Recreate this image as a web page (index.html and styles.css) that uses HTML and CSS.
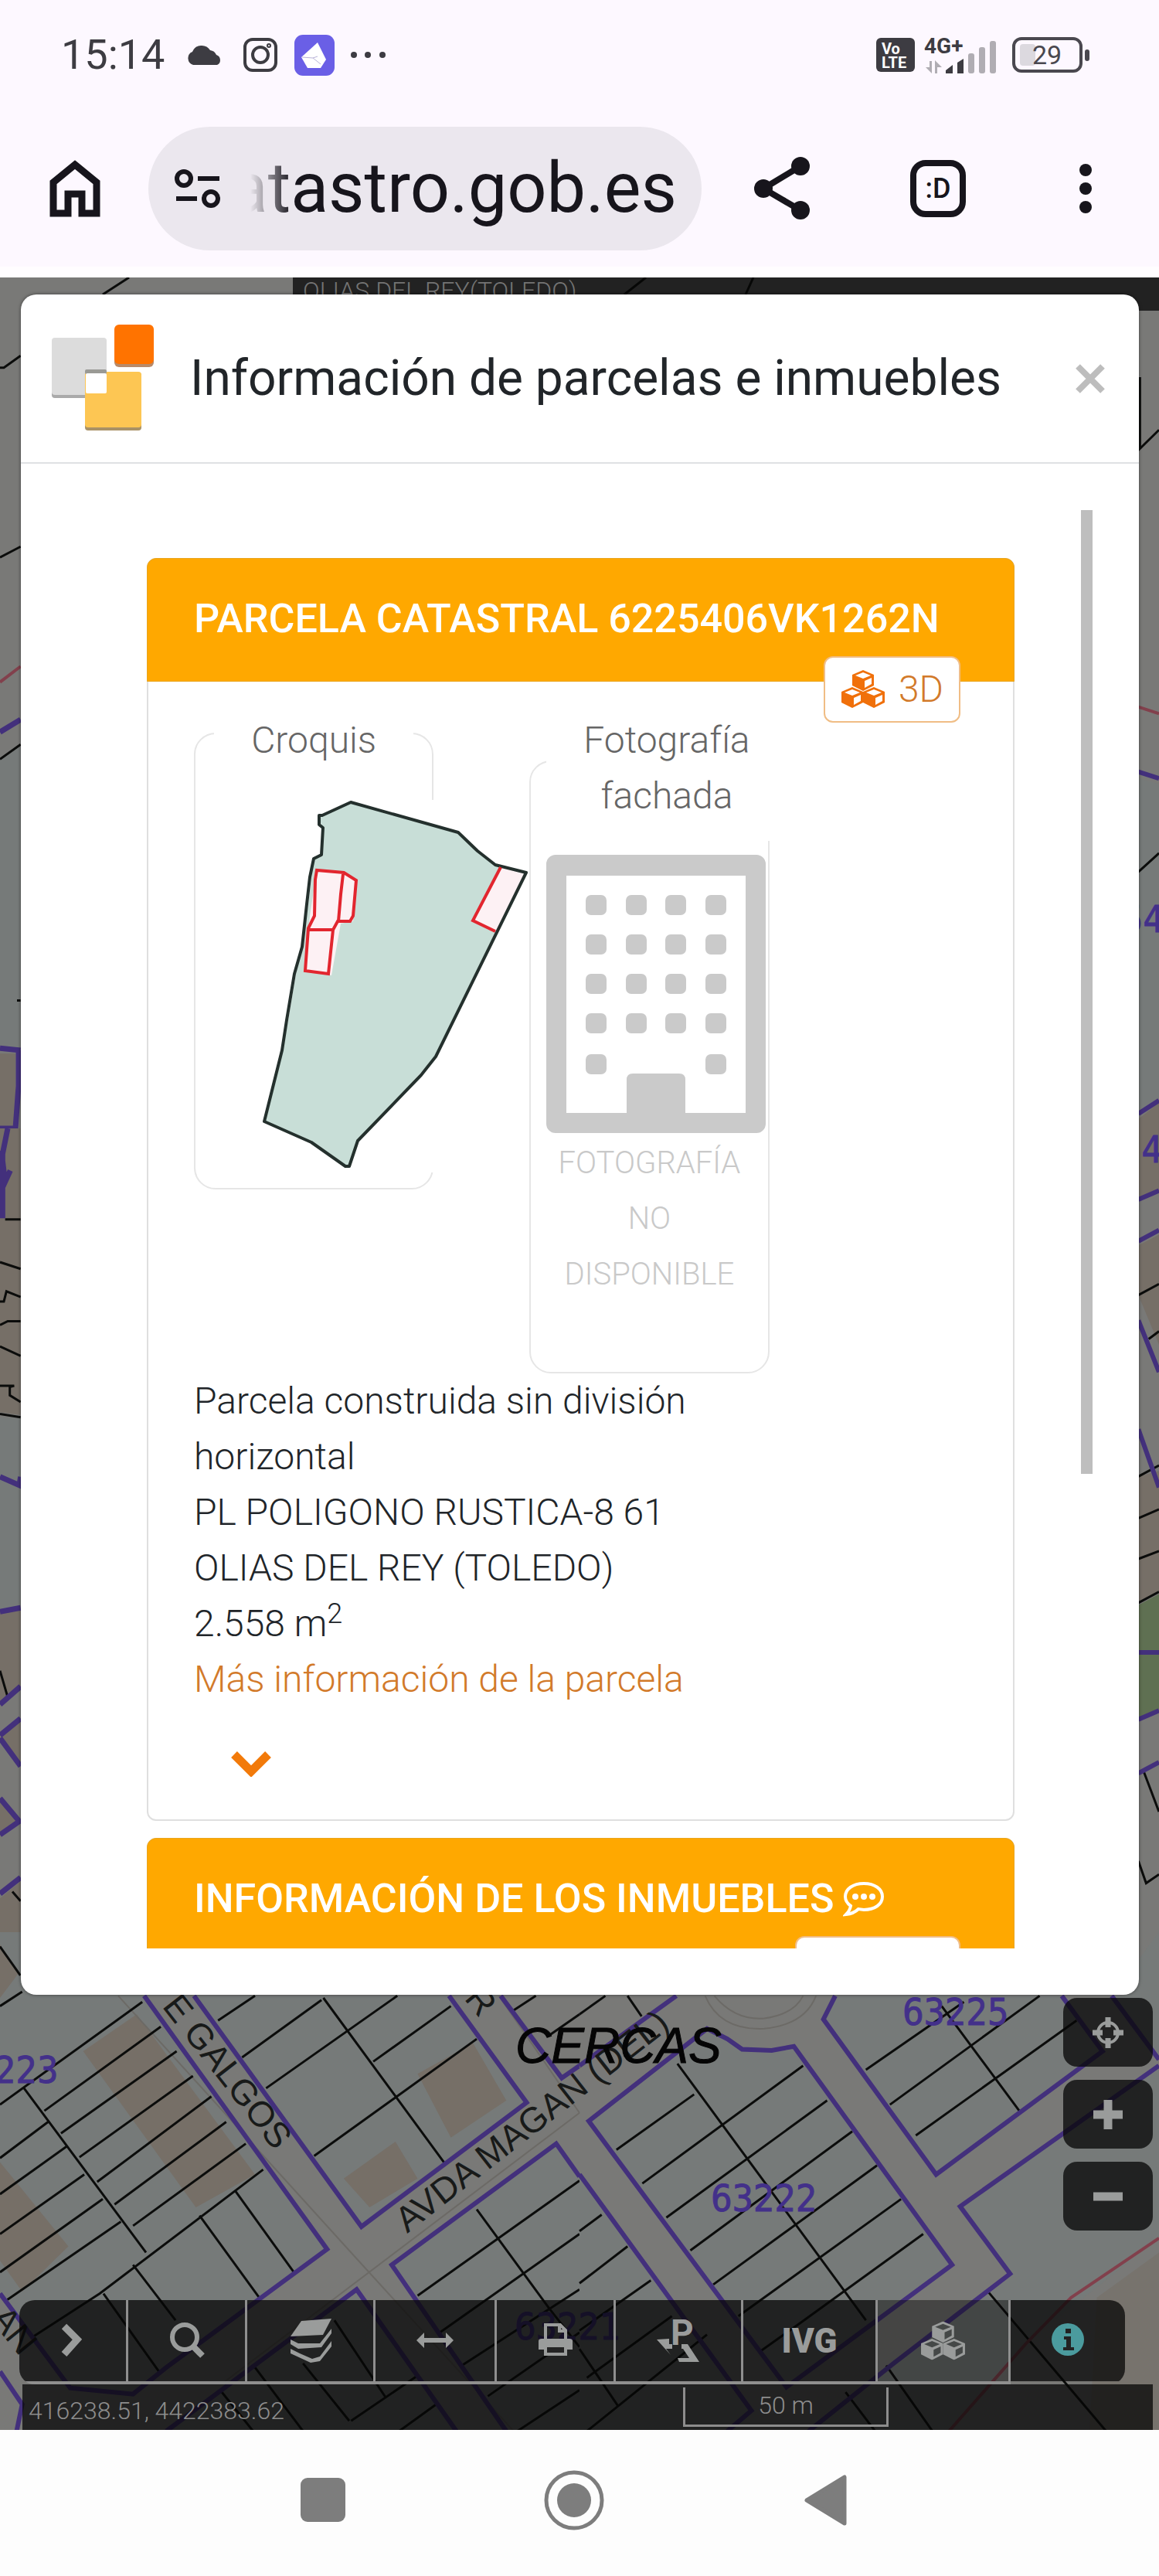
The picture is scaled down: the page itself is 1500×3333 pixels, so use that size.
FILE: index.html
```html
<!DOCTYPE html>
<html lang="es">
<head>
  <meta charset="UTF-8" />
  <meta name="viewport" content="width=device-width, initial-scale=1" />
  <title>Información de parcelas e inmuebles</title>
  <link rel="stylesheet" href="styles.css">
</head>
<body>
  <!-- Shared shapes -->
  <svg class="defs" aria-hidden="true">
    <symbol id="cube" viewBox="0 0 30 27">
      <path class="cube-side" d="M15 0 29 6V20L15 27 1 20V6Z"/>
      <path class="cube-face" d="M15 3 25 7 15 11 5 7ZM17 14 26 10V18L17 23Z"/>
    </symbol>
    <symbol id="cubes" viewBox="0 0 59 50">
      <use href="#cube" x="14" y="0" width="30" height="27"/>
      <use href="#cube" x="0" y="22" width="30" height="27"/>
      <use href="#cube" x="28" y="22" width="30" height="27"/>
    </symbol>
  </svg>

  <div class="status-bar">
    <span class="clock">15:14</span>
    <svg class="cloud" viewBox="0 0 48 26"><path d="M9 26a9 9 0 0 1-1-17A13 13 0 0 1 31 7a10 10 0 0 1 8 6 7 7 0 0 1 1 13Z" fill="#3d3c42"/></svg>
    <svg class="camera" viewBox="0 0 44 44" fill="none" stroke="#3d3c42" stroke-width="4"><rect x="2" y="2" width="40" height="40" rx="10"/><circle cx="22" cy="22" r="10"/><circle cx="33" cy="10" r="1"/></svg>
    <svg class="gem" viewBox="0 0 52 53"><rect width="52" height="53" rx="11" fill="#6a5fe6"/><path d="M30 10 9 29 17 43H34L41 32Z" fill="#fff"/><path d="M10 29 24 30 30 28M24 30 34 38" fill="none" stroke="#b9b4d8" stroke-width="1"/></svg>
    <svg class="more" viewBox="0 0 48 10"><g fill="#3d3c42"><circle cx="5" cy="5" r="4"/><circle cx="23" cy="5" r="4"/><circle cx="42" cy="5" r="4"/></g></svg>
    <span class="spacer"></span>
    <svg class="volte" viewBox="0 0 50 44"><rect width="50" height="44" rx="6" fill="#3d3c42"/><text x="7" y="21">Vo</text><text x="7" y="39">LTE</text></svg>
    <svg class="signal" viewBox="0 0 96 48">
      <text x="0" y="22">4G+</text>
      <g fill="#b0adb3"><path d="M7 32H10V48L2 40H7ZM14 48V31L23 40H17V48Z"/><rect x="57" y="22" width="8" height="26" rx="3"/><rect x="71" y="14" width="8" height="34" rx="3"/><rect x="85" y="6" width="8" height="42" rx="3"/></g>
      <path d="M28 48V44L37 37V48ZM43 48V34L51 29V48Z" fill="#3d3c42"/>
    </svg>
    <svg class="battery" viewBox="0 0 102 46"><rect x="2" y="2" width="87" height="42" rx="10" fill="none" stroke="#4a484f" stroke-width="4"/><rect x="10" y="9" width="20" height="28" rx="4" fill="#dcd9df"/><rect x="94" y="16" width="6" height="15" rx="3" fill="#4a484f"/><text x="26" y="35">29</text></svg>
  </div>

  <header class="browser-bar">
    <button aria-label="Inicio"><svg class="home" viewBox="0 0 66 74"><path d="M33 6 61 29V69H42V44H24V69H5V29Z" fill="none" stroke="#17151c" stroke-width="9"/></svg></button>
    <div class="address">
      <svg class="tune" viewBox="0 0 60 50" fill="none" stroke="#17151c" stroke-width="6"><circle cx="12" cy="12" r="9"/><path d="M30 12H58M2 38H29"/><circle cx="47" cy="38" r="9"/></svg>
      <span class="url">atastro.gob.es</span>
    </div>
    <button aria-label="Compartir"><svg class="share" viewBox="0 0 72 82" fill="#17151c"><path d="M60 12 12 41 60 69" fill="none" stroke="#17151c" stroke-width="8"/><circle cx="60" cy="12" r="12"/><circle cx="12" cy="41" r="12"/><circle cx="60" cy="69" r="12"/></svg></button>
    <button class="tabs">:D</button>
    <button aria-label="Menú"><svg class="kebab" viewBox="0 0 16 66" fill="#17151c"><circle cx="8" cy="9" r="8"/><circle cx="8" cy="33" r="8"/><circle cx="8" cy="57" r="8"/></svg></button>
  </header>

  <main class="map">
    <svg class="map-drawing" viewBox="0 359 1500 2785" preserveAspectRatio="xMidYMax slice" aria-hidden="true">
      <rect y="359" width="1500" height="2785" fill="#797977"/>

      <!-- West edge -->
      <g transform="translate(0 360) scale(.3333 .7015)">
        <path class="block" d="M0 885 80 860V1420L0 1415Z"/>
        <path class="building" d="M0 1430 60 1430V1568H0Z"/>
        <path class="plot" d="M0 165H15L80 143M0 515 80 495M0 887 80 860M66 1332H80"/>
        <path class="limit" d="M0 745 80 716"/>
        <path class="edge thick" d="M0 837 80 814M0 1420 80 1424M72 1424V1490L60 1568 0 1568"/>
      </g>
      <g transform="translate(0 1460) scale(.3333 .7271)">
        <path class="block" d="M0 515H80V850L0 858Z"/>
        <path class="building" d="M0 0H80V510L0 505ZM0 860 80 855V1000L0 1020ZM0 1085 80 1130V1050ZM0 1370 80 1340V1530H0ZM0 1195 75 1233 0 1255Z"/>
        <path class="plot" d="M20 162H80M0 238 80 250M0 308H15L25 290 80 300M0 350 30 343H80M0 388 80 405M0 458H55L38 460V475L80 487M0 508 80 514M0 965 30 1012M48 1358 80 1375M0 1457 80 1510M0 1556 90 1530"/>
        <path class="edge thick" d="M30 0 8 50 20 95 40 75M10 40V160M0 620 75 635 80 620M0 860 80 853M0 1025 80 993M0 1080 80 1050M0 1085 80 1135M0 1192 75 1233 0 1257M0 1362 80 1333"/>
      </g>

      <!-- East edge -->
      <g transform="translate(1440 360) scale(.3333 1.4223)">
        <path class="block" d="M100 455 180 460V745L100 760Z"/>
        <path class="building" d="M100 765 180 750V830L100 840ZM100 880 180 870V970L100 925ZM100 1090 180 1085V1195L100 1205Z"/>
        <path d="M100 1207 180 1197V1302L100 1310Z" fill="#5f7052"/>
        <path class="plot" d="M106 90V155L180 138M100 540 180 523M100 925 180 915M140 965 180 958M100 1090 180 1080M100 1128 180 1120M100 1165 180 1158M100 1205 180 1195M120 1358 180 1395M100 1440 130 1460 180 1452"/>
        <path class="limit" d="M100 390 180 396"/>
        <path class="edge" d="M100 449 180 455M100 760 180 748M100 838 180 830M100 876 180 866M100 948 180 995M100 1047 180 1100M100 1250H180M100 1311 180 1303M100 1360 180 1350"/>
      </g>
      <text class="ref" x="1452" y="1206">54</text>
      <text class="ref" x="1450" y="1504">24</text>

      <!-- South side, west half -->
      <g transform="translate(0 2500) scale(.4783 .5313)">
        <path class="block" d="M0 0H390V155L885 772 450 1060 360 1125 190 1110 0 880ZM525 155 978 717 1425 415 1215 155ZM1060 810 1505 515 1568 595V1215H1370ZM965 870 450 1215H1235Z"/>
        <path class="building" d="M225 290 370 200 690 590 530 670ZM0 560 185 765 60 875 0 800ZM1130 345 1280 270 1370 410 1220 500ZM930 600 1070 510 1130 600 1000 670ZM0 30 50 100 0 160Z"/>
        <path class="lane" d="M320 155 960 790 1390 1215M600 1100 1568 440M1350 155 1568 440"/>
        <path class="plot" d="M0 35 55 105M0 180 60 145M65 380 395 780M280 880 430 1070M360 810 475 945M385 170 0 420M435 230 120 435M130 462 0 550M478 290 165 490M183 520 0 638M522 350 215 548M228 590 0 735M572 400 263 608M327 705 20 895M278 650 0 828M612 462 310 663M665 515 360 715M712 578 270 880 90 985M540 690 700 888M635 628 795 828"/>
        <path class="plot" d="M690 155 590 215M870 165 655 305M1075 155 720 380M875 160 1205 565M1220 180 1010 315M1290 260 850 545M1450 155 1390 190M1568 200 1480 255"/>
        <path class="plot" d="M1290 675 1485 915 1568 1010M1568 605 1130 885M1568 735 1190 975M1568 870 1250 1055M1568 975 1320 1130M1568 1115 1400 1215M690 1060 820 1215M820 1050 945 1190M905 945 1045 1135M1130 1080 950 1190M1180 1150 1080 1215M600 1120 685 1215"/>
        <path class="edge" d="M390 155 885 772 450 1060 360 1125 190 1110 0 880M525 155 978 717 1425 415 1215 155M1355 155 1520 355 1568 325M1568 595 1505 515 1060 810 1370 1215M450 1215 965 870 1235 1215M0 1070 60 1150 45 1215"/>
      </g>

      <!-- South side, east half -->
      <g transform="translate(750 2500) scale(.4783 .5313)">
        <path class="block" d="M25 460 345 235 400 260 440 285 520 288 580 278 1008 810 560 1108ZM692 155 660 212 965 590 1415 290 1305 155ZM1568 0V310L1440 155ZM1568 325 1030 668 1165 832 620 1215H1000L1210 1000 1568 745ZM0 590 465 1165 430 1215H0Z"/>
        <path class="lane" d="M340 155Q380 240 500 235 610 225 640 155M365 155Q420 215 500 210 580 200 605 155M0 330 250 160"/>
        <path class="building" d="M1568 780 1400 890 1380 1215H1568Z" opacity=".6"/>
        <path class="plot" d="M0 200 70 155M130 155 168 205M265 320 775 945M310 395 100 530M605 325 170 612M670 410 235 695M738 485 300 775M805 568 362 858M870 650 430 935M930 735 600 950 490 1020"/>
        <path class="plot" d="M980 180 1190 435M1040 170 775 335M1245 155 840 420M1345 215 910 495M1105 875 1425 1215M830 1055 955 1215M720 1120 800 1215M60 688 0 728M130 765 0 855M193 848 0 970M250 935 20 1085M345 980 20 1215M0 1015 105 1155"/>
        <path class="edge" d="M0 325 262 155M0 590 465 1165 400 1215M25 460 345 235 400 260 440 285 520 288 580 278 1008 810 560 1108ZM692 155 660 212 965 590 1415 290 1305 155M1440 155 1568 310M1568 325 1030 668 1165 832 850 1050 620 1215"/>
        <path class="limit" d="M1568 745 1330 890 1210 1000 1000 1215"/>
      </g>

      <path class="plot" d="M167 359 133 381M836 359 808 381M975 359 965 381"/>
      <text class="ref" x="-7" y="2695">223</text>
      <text class="ref" x="920" y="2861">63222</text>
      <text class="ref" x="1168" y="2620">63225</text>
      <text class="ref" x="666" y="3027">63221</text>
      <text class="street" transform="translate(209 2596) rotate(52)">E GALGOS</text>
      <text class="street" transform="translate(527 2890) rotate(-38)">AVDA MAGAN (DEL)</text>
      <text class="street" transform="translate(600 2586) rotate(51)">R</text>
      <text class="street" transform="translate(-14 3000) rotate(51)">AN</text>
      <text class="place" x="667" y="2669">CERCAS</text>
    </svg>

    <div class="place-bar">OLIAS DEL REY(TOLEDO)</div>

    <section class="modal" role="dialog" aria-labelledby="modal-title">
      <header class="modal-header">
        <svg class="logo" viewBox="0 0 134 140">
          <rect x="1" y="19" width="71" height="76" rx="4" fill="#aaa"/><rect x="1" y="17" width="71" height="74" rx="4" fill="#dcdcdc"/>
          <rect x="82" y="2" width="51" height="53" rx="6" fill="#b98a68"/><rect x="82" y="0" width="51" height="51" rx="6" fill="#ff7300"/>
          <rect x="44" y="62" width="73" height="75" rx="4" fill="#a99266"/><rect x="44" y="61" width="73" height="72" rx="4" fill="#fdc653"/>
          <rect x="44" y="58" width="28" height="6" rx="2" fill="#9a9a95"/><rect x="45" y="63" width="27" height="26" rx="2" fill="#fff"/>
        </svg>
        <h1 id="modal-title">Información de parcelas e inmuebles</h1>
        <button class="close" aria-label="Cerrar"><svg viewBox="0 0 38 38"><path d="M3 3 35 35M35 3 3 35" stroke="#bdbdbd" stroke-width="8"/></svg></button>
      </header>

      <div class="modal-body">
        <div class="modal-scroll">
          <article class="card">
            <h2>PARCELA CATASTRAL 6225406VK1262N</h2>
            <button class="badge"><svg class="cubes" aria-hidden="true"><use href="#cubes"/></svg>3D</button>
            <div class="card-body">
              <div class="pictures">
                <fieldset>
                  <legend>Croquis</legend>
                  <svg class="sketch" viewBox="0 0 480 482" role="img" aria-label="Croquis de la parcela">
                    <rect width="410" height="482" fill="#fff"/>
                    <path d="M140 20 181 3 320 42 368 84 408 94 291 332 190 441 179 474H174L130 443 69 416 92 324 100 285 110 225 117 195 126 135 133 76 143 71 144 38Z" fill="#c8ded7"/>
                    <path d="M137 91 172 94 188 104 184 157 168 160 156 227 122 222 128 150Z" fill="#fdf1f4"/>
                    <path d="M375 87 407 96 371 172 339 156Z" fill="#fdf1f4"/>
                    <path d="M144 20 181 3 320 42 345 66 368 84 408 94 291 332 272 356 190 441 179 474H174L130 443 69 416 92 324 98 285 108 225 118 190 124 135 128 100 133 76 143 71 145 36 140 32V20Z" fill="none" stroke="#24302d" stroke-width="4" stroke-linejoin="round"/>
                    <path d="M135 103 137 91 172 94 188 104 184 150 180 157H164L158 168 152 225 122 221 126 166 134 150ZM126 168H158M171 96 168 122 165 157M375 87 339 156 368 170" fill="none" stroke="#e2262f" stroke-width="4"/>
                  </svg>
                </fieldset>
                <fieldset>
                  <legend>Fotografía<br>fachada</legend>
                  <svg class="facade" viewBox="0 0 284 360" fill="#cacaca" role="img" aria-label="Fachada">
                    <path fill-rule="evenodd" d="M12 0H272A12 12 0 0 1 284 12V348A12 12 0 0 1 272 360H12A12 12 0 0 1 0 348V12A12 12 0 0 1 12 0ZM26 27V334H104V291Q104 283 112 283H172Q180 283 180 291V334H258V27Z"/>
                    <g id="windows"><rect x="51" y="52" width="27" height="26" rx="7"/><rect x="103" y="52" width="27" height="26" rx="7"/><rect x="154" y="52" width="27" height="26" rx="7"/><rect x="206" y="52" width="27" height="26" rx="7"/></g>
                    <use href="#windows" y="51"/><use href="#windows" y="102"/><use href="#windows" y="153"/>
                    <rect x="51" y="258" width="27" height="26" rx="7"/><rect x="206" y="258" width="27" height="26" rx="7"/>
                  </svg>
                  <p class="no-photo">FOTOGRAFÍA NO DISPONIBLE</p>
                </fieldset>
              </div>
              <div class="details">
                <p>Parcela construida sin división horizontal</p>
                <p>PL POLIGONO RUSTICA-8 61</p>
                <p>OLIAS DEL REY (TOLEDO)</p>
                <p>2.558 m<sup>2</sup></p>
                <p><a href="#parcela">Más información de la parcela</a></p>
              </div>
              <button class="expand" aria-label="Desplegar"><svg viewBox="0 0 52 34"><path d="M4 5 26 27 48 5" fill="none" stroke="#f27a0a" stroke-width="11"/></svg></button>
            </div>
          </article>

          <article class="card">
            <h2>INFORMACIÓN DE LOS INMUEBLES
              <svg class="bubble" viewBox="0 0 54 46"><path d="M27 3C41 3 51 10 51 20S41 37 27 37L20 36Q14 42 4 43 9 38 10 32 3 27 3 20C3 10 13 3 27 3Z" fill="none" stroke="#fff" stroke-width="4"/><g fill="#fff"><circle cx="16" cy="20" r="4"/><circle cx="27" cy="20" r="4"/><circle cx="38" cy="20" r="4"/></g></svg>
            </h2>
            <button class="badge badge-wide" aria-label="Inmuebles"></button>
            <div class="card-body"></div>
          </article>
        </div>
        <div class="scroll-thumb"></div>
      </div>
    </section>

    <div class="map-bottom">
      <div class="zoom">
        <button aria-label="Mi posición"><svg viewBox="0 0 42 42" fill="none" stroke="#9a9c9b" stroke-width="4"><circle cx="21" cy="21" r="13"/><path d="M21 1V14M21 28V41M1 21H14M28 21H41" stroke-width="7"/></svg></button>
        <button aria-label="Acercar"><svg viewBox="0 0 42 42"><path d="M21 2V40M2 21H40" stroke="#9a9c9b" stroke-width="11"/></svg></button>
        <button aria-label="Alejar"><svg viewBox="0 0 42 42"><path d="M2 21H40" stroke="#9a9c9b" stroke-width="11"/></svg></button>
      </div>
      <div class="tools">
        <button aria-label="Mostrar"><svg viewBox="0 0 60 60"><path d="M19 11 36 28 19 47" fill="none" stroke="#9a9c9b" stroke-width="9"/></svg></button>
        <button aria-label="Buscar"><svg viewBox="0 0 60 60" fill="none" stroke="#9a9c9b" stroke-width="6"><circle cx="27" cy="25" r="16"/><path d="M38 37 50 49" stroke-width="8"/></svg></button>
        <button aria-label="Capas"><svg viewBox="0 0 60 60"><path d="M18 4 57 1 46 22 4 24Z" fill="#9a9c9b"/><path d="M4 28 14 33H42L57 14V20L44 38 14 40 4 34ZM4 40 16 46 32 53 42 50 57 30V37L42 56 30 58 4 46Z" fill="#9a9c9b"/></svg></button>
        <button aria-label="Medir"><svg viewBox="0 0 60 60"><path d="M6 29 16 19V26H44V19L54 29 44 39V32H16V39Z" fill="#9a9c9b"/></svg></button>
        <button aria-label="Imprimir"><svg viewBox="0 0 60 60" fill="none" stroke="#9a9c9b" stroke-width="4"><path d="M17 28V9H36L43 16V28M35 9V17H43"/><path d="M8 30Q8 27 12 27H48Q52 27 52 30V41H8Z" fill="#9a9c9b" stroke="none"/><path d="M17 36H43V47H17Z" fill="#242424"/></svg></button>
        <button aria-label="Parcela"><svg viewBox="0 0 60 60"><path d="M2 28 18 27V34H22V40H14L20 48ZM14 40H36L44 52H29L31 57H57L42 34H34V40Z" fill="#9a9c9b"/><text class="tool-letter" x="20" y="35">P</text></svg></button>
        <button class="tool-text">IVG</button>
        <button class="tool-active" aria-label="3D"><svg class="cubes" aria-hidden="true"><use href="#cubes"/></svg></button>
        <button aria-label="Información"><svg viewBox="0 0 60 60"><circle cx="30" cy="28" r="21" fill="#4b9b9e"/><path d="M27 14H34V20H27ZM25 24H34V38H38V42H24V38H28V28H25Z" fill="#222"/></svg></button>
      </div>
      <div class="coords">
        <span>416238.51, 4422383.62</span>
        <span class="scale">50 m</span>
      </div>
    </div>
  </main>

  <nav class="system-nav">
    <button aria-label="Recientes"><svg viewBox="0 0 78 78"><rect x="10" y="10" width="58" height="57" rx="9" fill="#7d7d7d"/></svg></button>
    <button aria-label="Inicio"><svg viewBox="0 0 78 78"><circle cx="39" cy="39" r="36" fill="none" stroke="#7d7d7d" stroke-width="5"/><circle cx="39" cy="39" r="22" fill="#7d7d7d"/></svg></button>
    <button aria-label="Atrás"><svg viewBox="0 0 78 78"><path d="M15 39 64 9V69Z" fill="#7d7d7d" stroke="#7d7d7d" stroke-width="5" stroke-linejoin="round"/></svg></button>
  </nav>
</body>
</html>
```
FILE: styles.css
```css
* {
  box-sizing: border-box;
}
body {
  margin: 0;
  height: 100vh;
  display: flex;
  flex-direction: column;
  background: #fdfdfd;
  color: #212529;
  font-family: Roboto, "Liberation Sans", sans-serif;
  font-size: 48px;
  font-weight: 300;
  line-height: 72px;
}
button {
  flex: none;
  border: 0;
  padding: 0;
  background: none;
  color: inherit;
  font: inherit;
  cursor: pointer;
}
svg {
  display: block;
  flex: none;
}
h1, h2, p {
  margin: 0;
}
.defs {
  position: absolute;
  width: 0;
  height: 0;
}

/* Phone status bar */
.status-bar {
  display: flex;
  align-items: center;
  height: 142px;
  padding: 0 88px 0 79px;
  background: #fdf8ff;
}
.clock {
  margin-right: 28px;
  color: #3d3c42;
  font-size: 54px;
  font-weight: 400;
}
.spacer {
  flex: 1;
}
.cloud {
  width: 48px;
  height: 26px;
  margin-right: 26px;
}
.camera {
  width: 44px;
  height: 44px;
  margin-right: 22px;
}
.gem {
  width: 52px;
  height: 53px;
  margin-right: 20px;
}
.more {
  width: 48px;
  height: 10px;
}
.volte {
  width: 50px;
  height: 44px;
  margin-right: 12px;
}
.volte text {
  fill: #fff;
  font-size: 20px;
  font-weight: 700;
}
.signal {
  width: 96px;
  height: 48px;
  margin-right: 18px;
}
.signal text {
  fill: #3d3c42;
  font-size: 28px;
  font-weight: 700;
}
.battery {
  width: 102px;
  height: 46px;
}
.battery text {
  fill: #4a484f;
  font-size: 34px;
  font-weight: 400;
}

/* Browser bar */
.browser-bar {
  display: flex;
  align-items: center;
  height: 217px;
  padding: 0 87px 0 64px;
  background: #fdf8ff;
  border-bottom: 14px solid #fffdff;
}
.home {
  width: 66px;
  height: 74px;
}
.address {
  display: flex;
  align-items: center;
  flex: 1;
  min-width: 0;
  height: 160px;
  margin: 0 68px 0 62px;
  padding: 0 32px 0 34px;
  border-radius: 80px;
  background: #ebe7ee;
}
.tune {
  width: 60px;
  height: 50px;
}
.url {
  flex: 1;
  min-width: 0;
  margin-left: 38px;
  height: 110px;
  overflow: hidden;
  display: flex;
  justify-content: flex-end;
  color: #17151c;
  font-size: 90px;
  font-weight: 400;
  line-height: 110px;
  mask-image: linear-gradient(to right, transparent, #000 54px);
}
.share {
  width: 72px;
  height: 82px;
}
.tabs {
  width: 72px;
  height: 74px;
  margin: 0 147px 0 130px;
  border: 8px solid #17151c;
  border-radius: 20px;
  color: #17151c;
  font-size: 36px;
  font-weight: 500;
  line-height: 36px;
}
.kebab {
  width: 16px;
  height: 66px;
}

/* Map */
.map {
  position: relative;
  flex: 1;
  min-height: 0;
  overflow: hidden;
  display: flex;
  flex-direction: column;
  justify-content: space-between;
}
.map-drawing {
  position: absolute;
  inset: 0;
  width: 100%;
  height: 100%;
}
.map-drawing path {
  vector-effect: non-scaling-stroke;
}
.block {
  fill: #767a79;
}
.building {
  fill: #766f67;
}
.plot {
  fill: none;
  stroke: #0b0c0b;
  stroke-width: 3px;
}
.edge {
  fill: none;
  stroke: #43307c;
  stroke-width: 6px;
}
.thick {
  stroke-width: 7px;
}
.lane {
  fill: none;
  stroke: #6c6a66;
  stroke-width: 2px;
}
.limit {
  fill: none;
  stroke: #82404c;
  stroke-width: 4px;
}
.ref {
  fill: #43308a;
  stroke: #43308a;
  stroke-width: 1px;
  font-family: "DejaVu Sans Condensed", "DejaVu Sans", sans-serif;
  font-size: 48px;
  font-weight: 400;
}
.street {
  fill: #181a19;
  font-family: "Liberation Sans", sans-serif;
  font-size: 46px;
  font-weight: 400;
}
.place {
  fill: #050505;
  stroke: #050505;
  stroke-width: 1px;
  font-family: "Liberation Sans", sans-serif;
  font-size: 64px;
  font-style: italic;
  font-weight: 400;
}
.place-bar {
  position: relative;
  margin-left: 379px;
  height: 43px;
  padding-left: 13px;
  background: rgba(6, 6, 6, 0.75);
  color: #747474;
  font-size: 32px;
  line-height: 34px;
}

/* Modal */
.modal {
  position: absolute;
  inset: 22px 26px 563px 27px;
  display: flex;
  flex-direction: column;
  border-radius: 20px;
  background: #fff;
  box-shadow: 0 0 4px rgba(0, 0, 0, 0.5);
}
.modal-header {
  display: flex;
  align-items: center;
  height: 219px;
  padding: 0 44px 0 39px;
  border-bottom: 2px solid #dfe1e3;
}
.logo {
  width: 134px;
  height: 140px;
}
.modal-header h1 {
  flex: 1;
  margin-left: 46px;
  font-size: 64px;
  font-weight: 400;
}
.close svg {
  width: 38px;
  height: 38px;
}
.modal-body {
  flex: 1;
  min-height: 0;
  display: flex;
  padding: 60px;
}
.modal-scroll {
  flex: 1;
  overflow-y: auto;
  scrollbar-width: none;
  padding: 62px 86px 0 103px;
}
.scroll-thumb {
  width: 15px;
  height: 67%;
  background: #bebebe;
}

/* Cards */
.card {
  position: relative;
  margin-bottom: 22px;
  border: 2px solid #dfdfdf;
  border-radius: 12px;
}
.card h2 {
  display: flex;
  align-items: center;
  gap: 12px;
  margin: -2px -2px 0;
  padding: 42px 60px 44px;
  border: 1px solid #e9a51d;
  border-radius: 12px 12px 0 0;
  background: #ffa800;
  color: #fff;
  font-size: 52px;
  font-weight: 500;
}
.bubble {
  width: 54px;
  height: 46px;
}
.badge {
  position: absolute;
  top: 125px;
  right: 68px;
  display: flex;
  align-items: center;
  gap: 16px;
  height: 86px;
  padding: 0 20px;
  border: 2px solid #f0bd85;
  border-radius: 12px;
  background: #fff;
  color: #d27a2a;
}
.badge-wide {
  width: 214px;
}
.cubes {
  width: 59px;
  height: 50px;
  color: #f0700a;
  --face: #fff;
}
.cube-side {
  fill: currentColor;
}
.cube-face {
  fill: var(--face);
}
.card-body {
  padding: 0 59px;
}
.pictures {
  display: flex;
  align-items: flex-start;
  gap: 124px;
}
fieldset {
  position: relative;
  width: 31%;
  min-width: 0;
  margin: 0;
  padding: 0 20px 20px;
  border: 2px solid #e6e6e6;
  border-radius: 28px;
}
legend {
  margin: 0 auto;
  padding: 40px 48px 22px;
  background: #fff;
  color: #666;
  text-align: center;
}
.sketch {
  width: 480px;
  height: 482px;
  margin-top: 19px;
}
.facade {
  width: 284px;
  height: 360px;
  margin-top: 18px;
}
.no-photo {
  padding: 3px 0 70px;
  color: #c9c9c9;
  font-size: 40px;
  text-align: center;
}
.details {
  width: 75%;
}
.details a {
  color: #d27a2a;
  text-decoration: none;
}
sup {
  font-size: 36px;
  line-height: 0;
}
.expand {
  display: flex;
  align-items: center;
  height: 145px;
  padding: 0 48px;
}
.expand svg {
  width: 52px;
  height: 34px;
}

/* Map controls */
.map-bottom {
  position: relative;
  padding: 0 8px 0 29px;
}
.zoom {
  display: flex;
  flex-direction: column;
  align-items: flex-end;
  gap: 17px;
  margin-bottom: 90px;
}
.zoom button {
  display: grid;
  place-items: center;
  width: 116px;
  height: 89px;
  border-radius: 18px;
  background: rgba(6, 6, 6, 0.75);
}
.zoom svg {
  width: 42px;
  height: 42px;
}
.tools {
  display: grid;
  grid-template-columns: 141fr 154fr 166fr 157fr 154fr 165fr 174fr 172fr 148fr;
  margin: 0 36px 0 -4px;
  border-radius: 20px;
  overflow: hidden;
}
.tools button {
  display: grid;
  place-items: center;
  height: 109px;
  border-right: 3px solid #8f8f8f;
  border-bottom: 4px solid #8f8f8f;
  background: rgba(6, 6, 6, 0.75) padding-box;
}
.tools button:last-child {
  border-right: 0;
  border-bottom-color: transparent;
}
.tools svg {
  width: 60px;
  height: 60px;
}
.tools .tool-active {
  background: rgba(6, 6, 6, 0.45) padding-box;
}
.tools .cubes {
  color: #9a9c9b;
  --face: #454847;
}
.tool-letter {
  fill: #9a9c9b;
  font-size: 46px;
  font-weight: 700;
}
.tools .tool-text {
  color: #9a9c9b;
  font-size: 44px;
  font-weight: 900;
}
.coords {
  display: flex;
  justify-content: space-between;
  height: 59px;
  padding: 4px 342px 4px 8px;
  background: rgba(6, 6, 6, 0.75);
  color: #8d8d8d;
  font-size: 32px;
  line-height: 60px;
}
.scale {
  width: 266px;
  border: 3px solid #8d8d8d;
  border-top: 0;
  line-height: 46px;
  text-align: center;
}

/* Phone navigation */
.system-nav {
  display: flex;
  justify-content: center;
  align-items: center;
  gap: 247px;
  height: 189px;
  padding: 0 14px 8px 0;
  background: #fdfdfd;
}
.system-nav svg {
  width: 78px;
  height: 78px;
}
```
